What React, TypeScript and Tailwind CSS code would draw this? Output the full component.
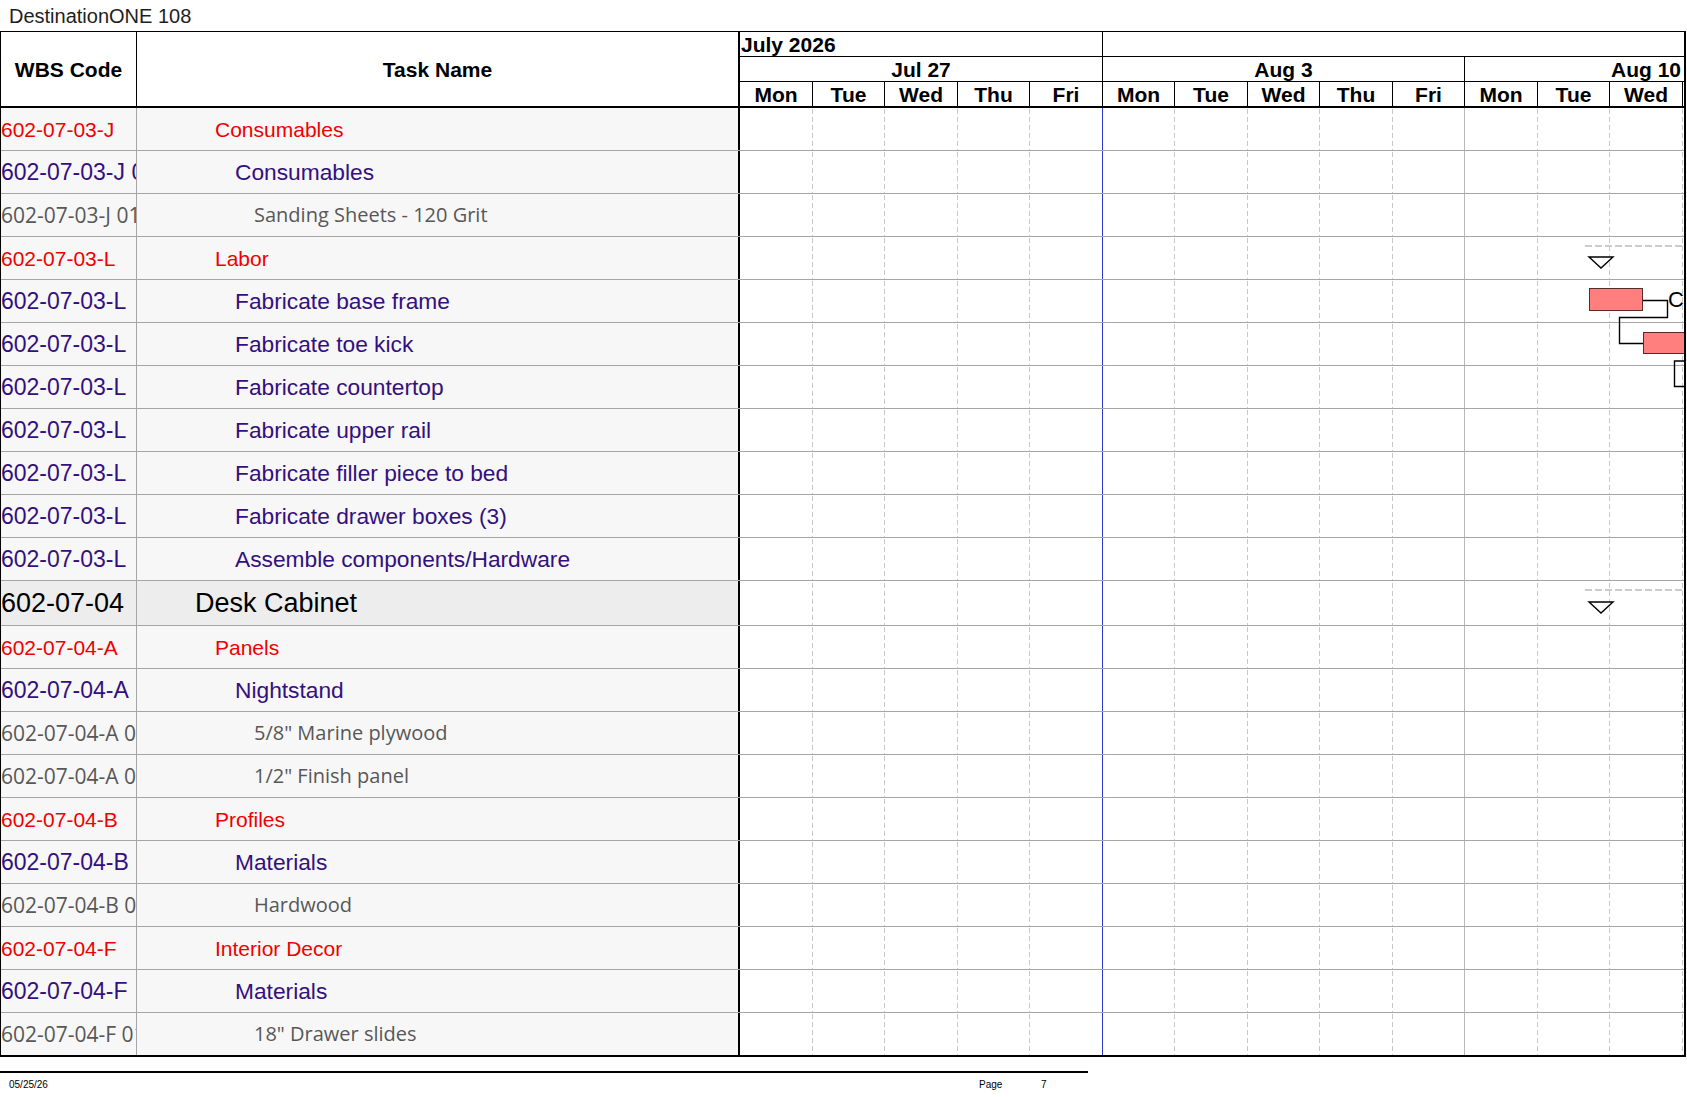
import React from 'react';

type Lvl = 'red' | 'purple' | 'gray' | 'top';
interface Row {
  wbs: string;
  name: string;
  lvl: Lvl;
}

const rows: Row[] = [
  { wbs: '602-07-03-J', name: 'Consumables', lvl: 'red' },
  { wbs: '602-07-03-J 01', name: 'Consumables', lvl: 'purple' },
  { wbs: '602-07-03-J 01 01', name: 'Sanding Sheets - 120 Grit', lvl: 'gray' },
  { wbs: '602-07-03-L', name: 'Labor', lvl: 'red' },
  { wbs: '602-07-03-L', name: 'Fabricate base frame', lvl: 'purple' },
  { wbs: '602-07-03-L', name: 'Fabricate toe kick', lvl: 'purple' },
  { wbs: '602-07-03-L', name: 'Fabricate countertop', lvl: 'purple' },
  { wbs: '602-07-03-L', name: 'Fabricate upper rail', lvl: 'purple' },
  { wbs: '602-07-03-L', name: 'Fabricate filler piece to bed', lvl: 'purple' },
  { wbs: '602-07-03-L', name: 'Fabricate drawer boxes (3)', lvl: 'purple' },
  { wbs: '602-07-03-L', name: 'Assemble components/Hardware', lvl: 'purple' },
  { wbs: '602-07-04', name: 'Desk Cabinet', lvl: 'top' },
  { wbs: '602-07-04-A', name: 'Panels', lvl: 'red' },
  { wbs: '602-07-04-A', name: 'Nightstand', lvl: 'purple' },
  { wbs: '602-07-04-A 01 01', name: '5/8" Marine plywood', lvl: 'gray' },
  { wbs: '602-07-04-A 01 02', name: '1/2" Finish panel', lvl: 'gray' },
  { wbs: '602-07-04-B', name: 'Profiles', lvl: 'red' },
  { wbs: '602-07-04-B', name: 'Materials', lvl: 'purple' },
  { wbs: '602-07-04-B 01 01', name: 'Hardwood', lvl: 'gray' },
  { wbs: '602-07-04-F', name: 'Interior Decor', lvl: 'red' },
  { wbs: '602-07-04-F', name: 'Materials', lvl: 'purple' },
  { wbs: '602-07-04-F 01 01', name: '18" Drawer slides', lvl: 'gray' },
];

const wbsCls: Record<Lvl, string> = {
  red: "text-[21px] text-[#f00000] font-['Liberation_Sans',Arial,sans-serif]",
  purple: "text-[23px] text-[#33107e] font-['Liberation_Sans',Arial,sans-serif]",
  gray: "text-[21px] text-[#575757] font-['Open_Sans',sans-serif]",
  top: "text-[27px] text-black font-['Liberation_Sans',Arial,sans-serif]",
};

const nameCls: Record<Lvl, string> = {
  red: "pl-[78px] text-[21px] text-[#f00000] font-['Liberation_Sans',Arial,sans-serif]",
  purple: "pl-[98px] text-[22.75px] text-[#33107e] font-['Liberation_Sans',Arial,sans-serif]",
  gray: "pl-[117px] text-[20px] text-[#575757] font-['Open_Sans',sans-serif]",
  top: "pl-[58px] text-[27px] text-black font-['Liberation_Sans',Arial,sans-serif]",
};

const dayW = [
  'w-[73px]', 'w-[72px]', 'w-[73px]', 'w-[72px]', 'w-[73px]',
  'w-[72px]', 'w-[73px]', 'w-[72px]', 'w-[73px]', 'w-[72px]',
  'w-[73px]', 'w-[72px]', 'w-[73px]',
];
const dayNames = ['Mon', 'Tue', 'Wed', 'Thu', 'Fri', 'Mon', 'Tue', 'Wed', 'Thu', 'Fri', 'Mon', 'Tue', 'Wed'];

const dashed =
  'bg-[linear-gradient(#c8c8c8_0_5px,transparent_5px)] bg-[length:1px_8px] bg-repeat-y bg-right';

function dayLine(i: number): string {
  if (i === 4) return 'border-r border-[#2a3ad0]';
  if (i === 9) return 'border-r border-[#b8b8b8]';
  return dashed;
}

function GanttCells() {
  return (
    <div className="flex w-[944px] h-full bg-white">
      {dayW.map((w, i) => (
        <div key={i} className={`${w} h-full ${dayLine(i)}`} />
      ))}
    </div>
  );
}

function BodyRow({ r, last }: { r: Row; last: boolean }) {
  const isTop = r.lvl === 'top';
  const h = isTop ? 'h-[45px]' : last ? 'h-[42px]' : 'h-[43px]';
  const bg = isTop ? 'bg-[#ededed]' : 'bg-[#f7f7f7]';
  return (
    <div className={`flex ${h} ${last ? '' : 'border-b border-[#a6a6a6]'}`}>
      <div
        className={`w-[136px] shrink-0 border-r border-[#a6a6a6] ${bg} flex items-center overflow-hidden whitespace-nowrap leading-none ${wbsCls[r.lvl]}`}
      >
        {r.wbs}
      </div>
      <div
        className={`w-[603px] shrink-0 border-r-2 border-black ${bg} flex items-center overflow-hidden whitespace-nowrap leading-none ${nameCls[r.lvl]}`}
      >
        {r.name}
      </div>
      <GanttCells />
    </div>
  );
}

function Overlay() {
  return (
    <svg
      className="absolute left-[739px] top-0 w-[944px] h-[948px] pointer-events-none"
      viewBox="740 108 944 948"
      width={944}
      height={948}
    >
      {/* Labor summary */}
      <line x1={1585} y1={246} x2={1684} y2={246} stroke="#cccccc" strokeWidth={2} strokeDasharray="7 3" />
      <polygon points="1589,257 1613,257 1601,268" fill="white" stroke="black" strokeWidth={1.4} />
      {/* Fabricate base frame */}
      <rect x={1589.5} y={288.5} width={53} height={22} fill="#ff7f7f" stroke="#5a2a2a" strokeWidth={1} />
      <path d="M1643 300.5 H1667.5 V317.5 H1619.5 V343.5 H1643" fill="none" stroke="black" strokeWidth={1.4} />
      <text x={1668} y={307} fontFamily="Liberation Sans, Arial, sans-serif" fontSize={22} fill="black">
        C
      </text>
      {/* Fabricate toe kick */}
      <rect x={1643.5} y={332.5} width={60} height={21} fill="#ff7f7f" stroke="#5a2a2a" strokeWidth={1} />
      <path d="M1700 361 H1674.5 V386.5 H1700" fill="none" stroke="black" strokeWidth={1.4} />
      {/* Desk Cabinet summary */}
      <line x1={1585} y1={590} x2={1684} y2={590} stroke="#cccccc" strokeWidth={2} strokeDasharray="7 3" />
      <polygon points="1589,602 1613,602 1601,613" fill="white" stroke="black" strokeWidth={1.4} />
    </svg>
  );
}

export default function App() {
  return (
    <div className="w-[1687px] h-[1097px] bg-white overflow-hidden font-['Liberation_Sans',Arial,sans-serif] text-black">
      <div className="h-[31px] pl-[9px] flex items-center text-[20px] text-[#1e1e1e] leading-none">
        DestinationONE 108
      </div>
      <div className="w-[1686px] border-t border-l border-r-2 border-b-2 border-black">
        {/* Header */}
        <div className="flex h-[76px] border-b-2 border-black">
          <div className="w-[136px] shrink-0 border-r border-black flex items-center justify-center font-bold text-[21px] leading-none">
            WBS Code
          </div>
          <div className="w-[603px] shrink-0 border-r-2 border-black flex items-center justify-center font-bold text-[21px] leading-none">
            Task Name
          </div>
          <div className="w-[944px] flex flex-col font-bold text-[21px] leading-none">
            <div className="flex h-[25px] border-b border-black">
              <div className="w-[363px] border-r border-black pl-[1px] flex items-center">July 2026</div>
              <div className="flex-1" />
            </div>
            <div className="flex h-[25px] border-b border-black">
              <div className="w-[363px] border-r border-black flex items-center justify-center">Jul 27</div>
              <div className="w-[362px] border-r border-black flex items-center justify-center">Aug 3</div>
              <div className="flex-1 overflow-hidden">
                <div className="w-[362px] h-full flex items-center justify-center">Aug 10</div>
              </div>
            </div>
            <div className="flex h-[24px]">
              {dayNames.map((d, i) => (
                <div key={i} className={`${dayW[i]} border-r border-black flex items-center justify-center`}>
                  {d}
                </div>
              ))}
            </div>
          </div>
        </div>
        {/* Body */}
        <div className="relative">
          {rows.map((r, i) => (
            <BodyRow key={i} r={r} last={i === rows.length - 1} />
          ))}
          <Overlay />
        </div>
      </div>
      {/* Footer */}
      <div className="mt-[14px] w-[1088px] border-t-2 border-black" />
      <div className="w-[1088px] h-[24px] flex items-center text-[10px] leading-none text-black">
        <span className="w-[979px] pl-[9px]">05/25/26</span>
        <span className="w-[62px]">Page</span>
        <span>7</span>
      </div>
    </div>
  );
}
